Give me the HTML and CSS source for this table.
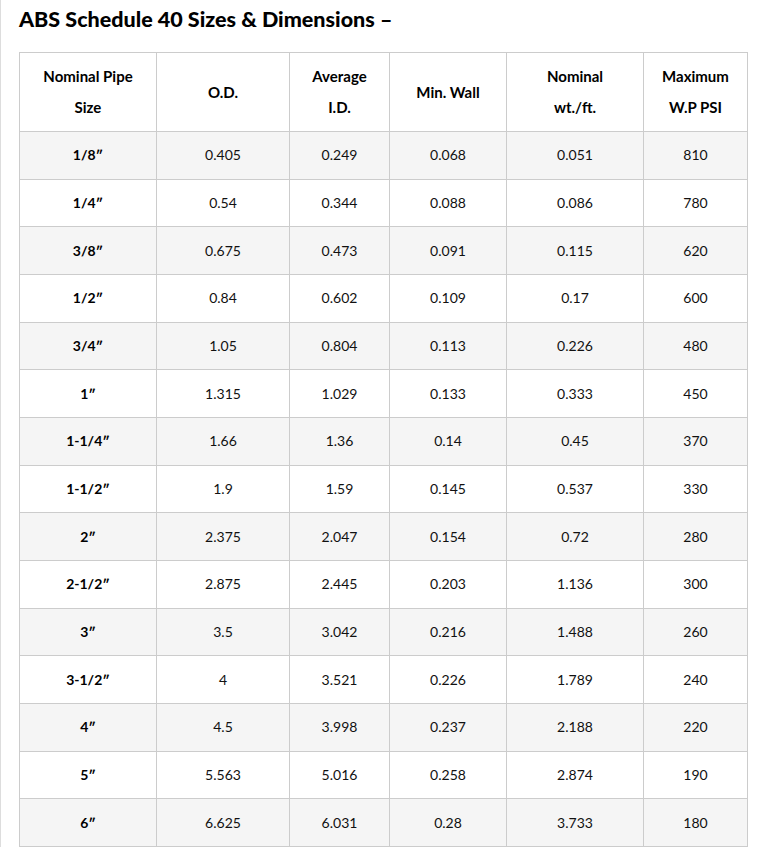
FILE: index.html
```html
<!DOCTYPE html>
<html>
<head>
<meta charset="utf-8">
<link rel="stylesheet" href="styles.css">
</head>
<body>
<div class="page">
  <h2 class="title">ABS Schedule 40 Sizes &amp; Dimensions –</h2>
  <table class="specs">
    <colgroup>
      <col class="c1"><col class="c2"><col class="c3"><col class="c4"><col class="c5"><col class="c6">
    </colgroup>
    <thead>
      <tr>
        <th>Nominal Pipe<br>Size</th>
        <th>O.D.</th>
        <th>Average<br>I.D.</th>
        <th>Min. Wall</th>
        <th>Nominal<br>wt./ft.</th>
        <th>Maximum<br>W.P PSI</th>
      </tr>
    </thead>
    <tbody>
      <tr><td class="size">1/8″</td><td>0.405</td><td>0.249</td><td>0.068</td><td>0.051</td><td>810</td></tr>
      <tr><td class="size">1/4″</td><td>0.54</td><td>0.344</td><td>0.088</td><td>0.086</td><td>780</td></tr>
      <tr><td class="size">3/8″</td><td>0.675</td><td>0.473</td><td>0.091</td><td>0.115</td><td>620</td></tr>
      <tr><td class="size">1/2″</td><td>0.84</td><td>0.602</td><td>0.109</td><td>0.17</td><td>600</td></tr>
      <tr><td class="size">3/4″</td><td>1.05</td><td>0.804</td><td>0.113</td><td>0.226</td><td>480</td></tr>
      <tr><td class="size">1″</td><td>1.315</td><td>1.029</td><td>0.133</td><td>0.333</td><td>450</td></tr>
      <tr><td class="size">1-1/4″</td><td>1.66</td><td>1.36</td><td>0.14</td><td>0.45</td><td>370</td></tr>
      <tr><td class="size">1-1/2″</td><td>1.9</td><td>1.59</td><td>0.145</td><td>0.537</td><td>330</td></tr>
      <tr><td class="size">2″</td><td>2.375</td><td>2.047</td><td>0.154</td><td>0.72</td><td>280</td></tr>
      <tr><td class="size">2-1/2″</td><td>2.875</td><td>2.445</td><td>0.203</td><td>1.136</td><td>300</td></tr>
      <tr><td class="size">3″</td><td>3.5</td><td>3.042</td><td>0.216</td><td>1.488</td><td>260</td></tr>
      <tr><td class="size">3-1/2″</td><td>4</td><td>3.521</td><td>0.226</td><td>1.789</td><td>240</td></tr>
      <tr><td class="size">4″</td><td>4.5</td><td>3.998</td><td>0.237</td><td>2.188</td><td>220</td></tr>
      <tr><td class="size">5″</td><td>5.563</td><td>5.016</td><td>0.258</td><td>2.874</td><td>190</td></tr>
      <tr><td class="size">6″</td><td>6.625</td><td>6.031</td><td>0.28</td><td>3.733</td><td>180</td></tr>
    </tbody>
  </table>
</div>
</body>
</html>
```
FILE: styles.css
```css
html, body {
  margin: 0;
  padding: 0;
  background: #fff;
}
body {
  font-family: Lato, "Open Sans", sans-serif;
  color: #111;
}
.page {
  border-left: 1px solid #ddd;
  padding: 6px 0 0 18px;
  min-height: 847px;
  box-sizing: border-box;
}
.title {
  margin: 0;
  font-size: 21.5px;
  line-height: 26px;
  font-weight: 900;
  color: #000;
}
.specs {
  margin-top: 20px;
  width: 729px;
  border-collapse: collapse;
  table-layout: fixed;
  font-size: 14px;
}
.c1 { width: 137px; }
.c2 { width: 133px; }
.c3 { width: 100px; }
.c4 { width: 117px; }
.c5 { width: 137px; }
.c6 { width: 104px; }
.specs th,
.specs td {
  border: 1px solid #ccc;
  text-align: center;
  vertical-align: middle;
  padding: 0 4px;
}
.specs th {
  height: 78px;
  line-height: 31px;
  font-size: 15px;
  font-weight: 700;
  color: #000;
}
.specs td {
  height: 46.67px;
  line-height: 20px;
  font-weight: 400;
}
.specs td.size {
  font-weight: 700;
  color: #000;
}
.specs tbody tr:nth-child(odd) {
  background: #f5f5f5;
}
```
